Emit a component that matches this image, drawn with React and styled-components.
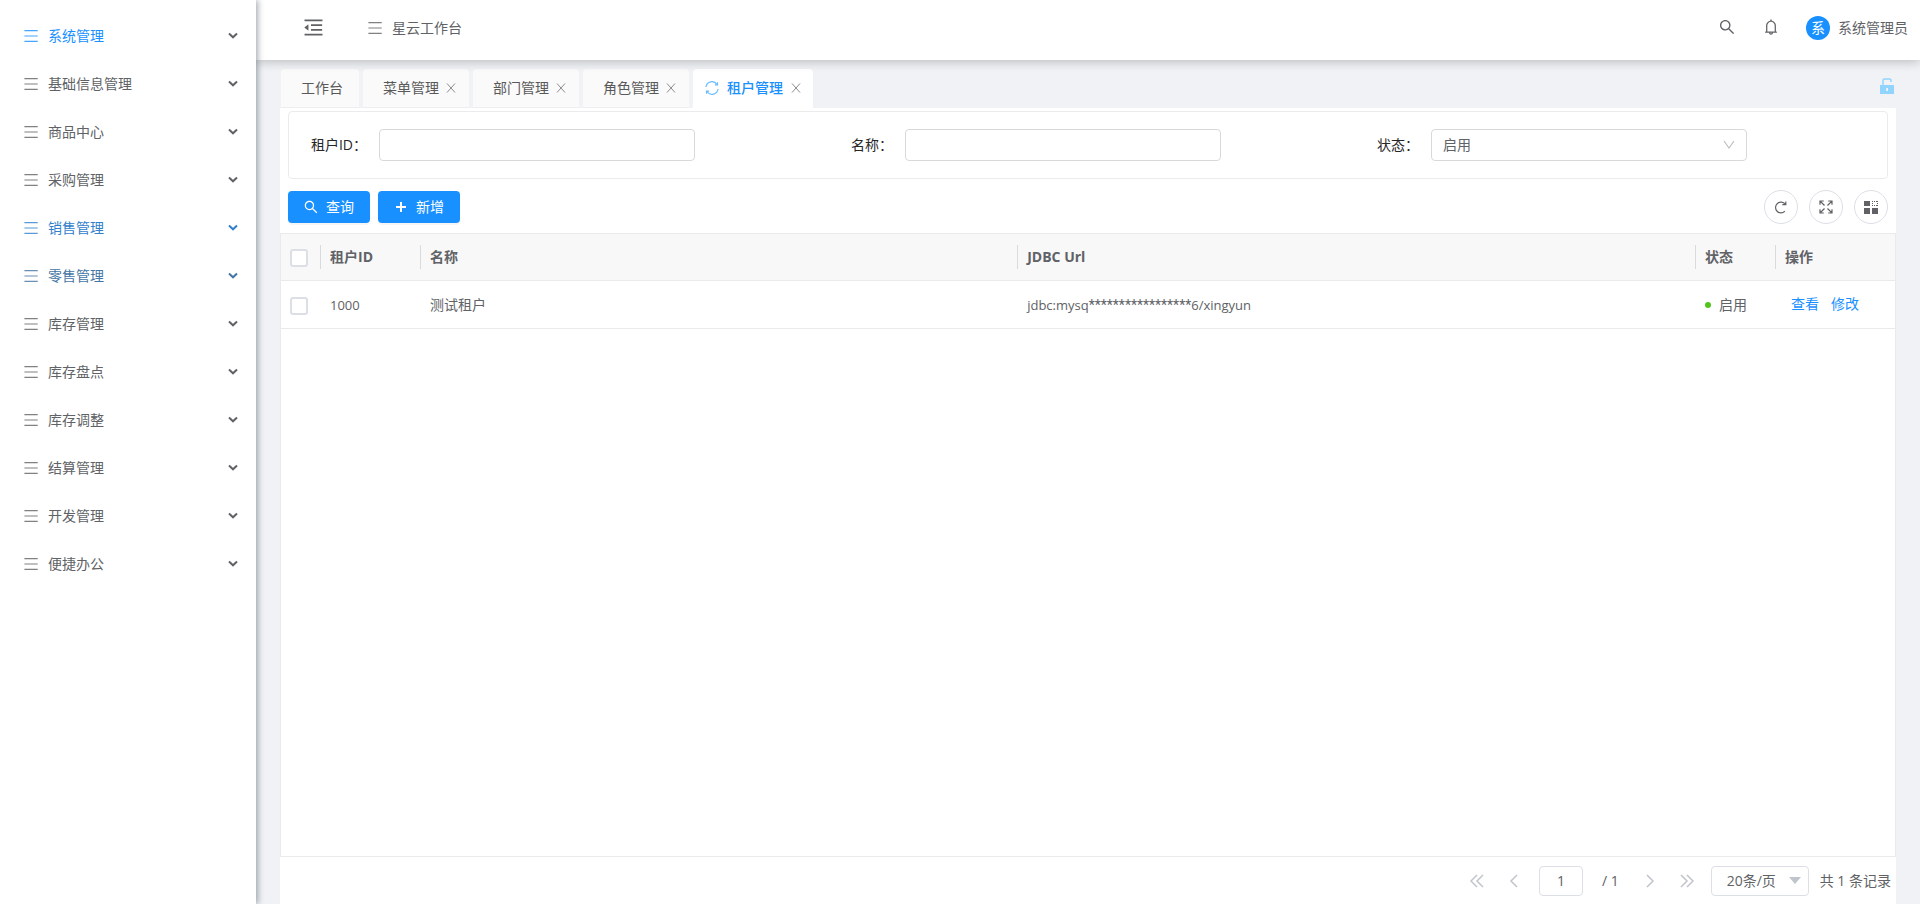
import React, { useState } from "react";
import styled, { createGlobalStyle } from "styled-components";

const GlobalStyle = createGlobalStyle`
  *, *::before, *::after { box-sizing: border-box; }
  body {
    margin: 0;
    color: #515a6e;
    background: #f0f2f5;
    font-family: "Open Sans", "Noto Sans CJK SC", sans-serif;
    font-size: 14px;
    line-height: 20px;
  }
  button, input, select { font: inherit; color: inherit; }
  button { cursor: pointer; }
`;

const blue = "#1890ff";
const ink = "#606266";

/* ---------- icons ---------- */

const Svg = ({ size = 14, box = 1024, children, ...rest }) => (
  <svg width={size} height={size} viewBox={`0 0 ${box} ${box}`} fill="currentColor" aria-hidden="true" {...rest}>
    {children}
  </svg>
);

const BarsIcon = () => (
  <Svg box={14}>
    <path d="M.4 1h13.300v1.200H.4zM.4 6.400h13.300v1.200H.4zM.4 11.800h13.300v1.200H.4z" />
  </Svg>
);

const ChevronIcon = () => (
  <Svg size={10} box={10} fill="none" stroke="currentColor" strokeWidth="2">
    <path d="M1 2.500l4 3.800 4-3.800" />
  </Svg>
);

const FoldIcon = () => (
  <Svg size={23} box={1024}>
    <path d="M408 442h480c4.400 0 8-3.600 8-8v-56c0-4.400-3.600-8-8-8H408c-4.400 0-8 3.600-8 8v56c0 4.400 3.600 8 8 8zm-8 204c0 4.400 3.600 8 8 8h480c4.400 0 8-3.600 8-8v-56c0-4.400-3.600-8-8-8H408c-4.400 0-8 3.600-8 8v56zm504-486H120c-4.400 0-8 3.600-8 8v56c0 4.400 3.600 8 8 8h784c4.400 0 8-3.600 8-8v-56c0-4.400-3.600-8-8-8zm0 632H120c-4.400 0-8 3.600-8 8v56c0 4.400 3.600 8 8 8h784c4.400 0 8-3.600 8-8v-56c0-4.400-3.600-8-8-8zM115.400 518.900L271.700 642c5.800 4.600 14.400.5 14.400-6.900V388.900c0-7.400-8.500-11.500-14.400-6.900L115.400 505.100a8.740 8.740 0 000 13.800z" />
  </Svg>
);

const SearchIcon = ({ size }) => (
  <Svg size={size}>
    <path d="M909.600 854.500L649.900 594.800C690.200 542.700 712 479 712 412c0-80.200-31.300-155.400-87.900-212.100-56.600-56.700-132-87.900-212.100-87.900s-155.500 31.300-212.100 87.900C143.200 256.500 112 331.800 112 412c0 80.100 31.300 155.500 87.900 212.100C256.500 680.800 331.800 712 412 712c67 0 130.600-21.800 182.700-62l259.700 259.600a8.200 8.200 0 0011.600 0l43.600-43.500a8.200 8.200 0 000-11.600zM570.400 570.400C528 612.700 471.800 636 412 636s-116-23.300-158.400-65.600C211.300 528 188 471.800 188 412s23.300-116.100 65.600-158.400C296 211.300 352.200 188 412 188s116.100 23.200 158.400 65.600S636 352.200 636 412s-23.300 116.100-65.600 158.400z" />
  </Svg>
);

const BellIcon = () => (
  <Svg size={18}>
    <path d="M816 768h-24V428c0-141.100-104.300-257.700-240-277.100V112c0-22.100-17.900-40-40-40s-40 17.900-40 40v38.900c-135.700 19.400-240 136-240 277.100v340h-24c-17.700 0-32 14.300-32 32v32c0 4.400 3.600 8 8 8h216c0 61.800 50.200 112 112 112s112-50.200 112-112h216c4.400 0 8-3.600 8-8v-32c0-17.700-14.300-32-32-32zM512 888c-26.500 0-48-21.500-48-48h96c0 26.500-21.500 48-48 48zM304 768V428c0-55.600 21.600-107.800 60.900-147.100S456.400 220 512 220c55.600 0 107.800 21.600 147.100 60.900S720 372.400 720 428v340H304z" />
  </Svg>
);

const CloseIcon = () => (
  <Svg size={10} box={10} fill="none" stroke="currentColor">
    <path d="M1 .5l8 9M9 .5l-8 9" />
  </Svg>
);

const SyncIcon = () => (
  <Svg size={14} box={14} fill="none" stroke="currentColor" strokeWidth="1.200">
    <path d="M1 6a6 6 0 0 1 11-2.500M13 8a6 6 0 0 1-11 2.500M12.500 1.200v2.600h-2.600M1.500 12.800v-2.600h2.600" />
  </Svg>
);

const UnlockIcon = () => (
  <Svg size={16} box={16}>
    <path d="M1 7h14v9H1zM7.200 10v3h1.800v-3z" fillRule="evenodd" />
    <path d="M4 7V2.500Q4 1 5.500 1h5Q12 1 12 2.500V4" fill="none" stroke="currentColor" strokeWidth="1.500" />
  </Svg>
);

const PlusIcon = () => (
  <Svg size={16} box={16} fill="none" stroke="currentColor" strokeWidth="2">
    <path d="M8 3v10M3 8h10" />
  </Svg>
);

const ReloadIcon = () => (
  <Svg size={14} box={14} fill="none" stroke="currentColor" strokeWidth="1.200">
    <path d="M11.200 4.200A5.400 5.400 0 1 0 10.900 11.200M11.800 1.500v3.200H8.300" />
  </Svg>
);

const ExpandIcon = () => (
  <Svg size={14} box={14} fill="none" stroke="currentColor" strokeWidth="1.200">
    <path d="M1 4.800V1h3.800M1 1l4.500 4.500M9.200 1H13v3.800M13 1L8.500 5.500M1 9.200V13h3.800M1 13l4.500-4.500M13 9.200V13H9.200M13 13L8.500 8.500" />
  </Svg>
);

const GridIcon = () => (
  <Svg size={14} box={14}>
    <path d="M0 1h6v5H0zM0 8h6v6H0zM8 8h6v6H8z" />
    <path d="M8 1.500h6M8 5.500h6M8.500 1v5M13.500 1v5" fill="none" stroke="currentColor" strokeDasharray="1 1" />
  </Svg>
);

const SelectArrow = () => (
  <Svg size={12} box={12} fill="none" stroke="#bfbfbf" strokeWidth="1.200">
    <path d="M1 2l5 7 5-7" />
  </Svg>
);

const Triangle = () => (
  <Svg size={12} box={12} fill="#c0c4cc">
    <path d="M0 2h12L6 9z" />
  </Svg>
);

const Arrows = ({ d }) => (
  <Svg size={14} box={14} fill="none" stroke="currentColor" strokeWidth="1.500">
    <path d={d} />
  </Svg>
);

/* ---------- frame ---------- */

const Page = styled.div`
  display: flex;
  min-height: 100vh;
`;

const Sidebar = styled.nav`
  position: relative;
  z-index: 2;
  flex: 0 0 256px;
  padding-top: 12px;
  background: #fff;
  box-shadow: 2px 0 6px rgba(0, 21, 41, 0.35);
`;

const MenuItem = styled.button`
  display: flex;
  align-items: center;
  gap: 10px;
  width: 100%;
  height: 48px;
  padding: 0 18px 0 24px;
  margin: 0;
  border: 0;
  background: none;
  text-align: left;
  color: ${(p) => p.$color || ink};
  svg:first-child { opacity: 0.8; }
  svg:last-child { color: ${(p) => (p.$open ? ink : "inherit")}; }
`;

const Grow = styled.span`
  flex: 1;
`;

const Main = styled.div`
  display: flex;
  flex-direction: column;
  flex: 1;
  min-width: 0;
`;

const Header = styled.header`
  position: relative;
  z-index: 1;
  display: flex;
  align-items: center;
  height: 60px;
  padding: 0 12px 4px 46px;
  background: #fff;
  color: ${ink};
  box-shadow: 0 2px 10px rgba(0, 0, 0, 0.22);
`;

const IconButton = styled.button`
  display: flex;
  padding: 0;
  border: 0;
  background: none;
  color: ${(p) => p.$color || ink};
`;

const HeaderButton = styled(IconButton)`
  padding-bottom: 2px;
`;

const Crumb = styled.span`
  display: flex;
  align-items: center;
  gap: 10px;
  margin-left: 43px;
  svg { opacity: 0.8; }
`;

const HeaderTools = styled.div`
  display: flex;
  align-items: center;
  gap: 26px;
  margin-left: auto;
`;

const User = styled.span`
  display: flex;
  align-items: center;
  gap: 8px;
`;

const Avatar = styled.span`
  width: 24px;
  height: 24px;
  border-radius: 50%;
  background: ${blue};
  color: #fff;
  line-height: 24px;
  text-align: center;
`;

/* ---------- tabs ---------- */

const TabBar = styled.div`
  display: flex;
  height: 48px;
  padding: 9px 25px 0;
`;

const Tabs = styled.div`
  display: flex;
  gap: 4px;
  flex: 1;
`;

const Tab = styled.div`
  display: flex;
  align-items: center;
  gap: ${(p) => (p.$active ? 8 : 7)}px;
  height: 39px;
  padding: 0 ${(p) => (p.$active ? 12 : p.$closable ? 13 : 16)}px 0 ${(p) => (p.$active ? 12 : 20)}px;
  border-radius: 4px 4px 0 0;
  border-bottom: 1px solid ${(p) => (p.$active ? "#fff" : "#eeeeee")};
  background: ${(p) => (p.$active ? "#fff" : "#fafafa")};
  color: ${(p) => (p.$active ? blue : "#595959")};
  > svg { color: #69bcff; }
`;

const TabLabel = styled.button`
  padding: 0;
  border: 0;
  background: none;
  font-weight: ${(p) => (p.$active ? 500 : 400)};
`;

const LockButton = styled(IconButton)`
  align-self: flex-start;
  margin-top: 9px;
`;

/* ---------- content ---------- */

const Content = styled.main`
  display: flex;
  flex-direction: column;
  flex: 1;
  margin: 0 24px;
  background: #fff;
`;

const SearchForm = styled.form`
  display: grid;
  grid-template-columns: repeat(3, 1fr);
  margin: 3px 8px 0;
  padding: 17px 10px;
  border: 1px solid #ebebeb;
  border-radius: 4px;
`;

const Field = styled.div`
  display: grid;
  grid-template-columns: 68px 60%;
  column-gap: 12px;
  align-items: center;
  color: #262626;
  label { text-align: right; white-space: nowrap; }
`;

const TextInput = styled.input`
  width: 100%;
  height: 32px;
  padding: 0 11px;
  border: 1px solid #d9d9d9;
  border-radius: 4px;
  background: #fff;
`;

const SelectBox = styled.span`
  display: grid;
  align-items: center;
  color: ${ink};
  > * { grid-area: 1 / 1; }
  svg { justify-self: end; margin-right: ${(p) => p.$inset || 12}px; pointer-events: none; }
`;

const Select = styled.select`
  appearance: none;
  width: ${(p) => p.$width || "100%"};
  height: ${(p) => p.$height || 32}px;
  padding: 0 ${(p) => p.$pad || 11}px;
  border: 1px solid ${(p) => p.$border || "#d9d9d9"};
  border-radius: 4px;
  background: #fff;
`;

const Toolbar = styled.div`
  display: flex;
  align-items: center;
  justify-content: space-between;
  height: 54px;
  padding: 2px 8px 0;
`;

const Group = styled.div`
  display: flex;
  gap: ${(p) => p.$gap}px;
`;

const PrimaryButton = styled.button`
  display: flex;
  align-items: center;
  gap: 7px;
  height: 32px;
  padding: 0 16px 0 15px;
  border: 0;
  border-radius: 4px;
  background: ${blue};
  color: #fff;
  box-shadow: 0 2px 0 rgba(0, 0, 0, 0.04);
`;

const RoundButton = styled.button`
  display: flex;
  align-items: center;
  justify-content: center;
  width: 34px;
  height: 34px;
  padding: 0;
  border: 1px solid #dcdfe6;
  border-radius: 50%;
  background: #fff;
  color: ${ink};
`;

const TableFrame = styled.div`
  flex: 1;
  border: 1px solid #e8eaec;
`;

const Table = styled.table`
  width: 100%;
  table-layout: fixed;
  border-collapse: separate;
  border-spacing: 0;
  color: ${ink};
`;

const Th = styled.th`
  height: 47px;
  padding: 0;
  border-bottom: 1px solid #e8eaec;
  background: #f8f8f9;
  text-align: left;
  font-size: 14px;
  font-weight: 700;
`;

const HeadCell = styled.div`
  display: flex;
  align-items: center;
  height: 24px;
  padding-left: 9px;
  border-right: ${(p) => (p.$last ? 0 : 1)}px solid #d9dbde;
`;

const Td = styled.td`
  height: 48px;
  padding: 0 0 0 9px;
  border-bottom: 1px solid #e8eaec;
`;

const Latin = styled.span`
  font-size: 13px;
`;

const Mask = styled.span`
  font-family: Roboto, sans-serif;
  font-size: 14px;
`;

const Check = styled.input`
  appearance: none;
  display: block;
  width: 18px;
  height: 18px;
  margin: 2px 0 0;
  border: 2px solid #dcdfe6;
  border-radius: 3px;
  background: #fff;
`;

const Status = styled.span`
  display: flex;
  align-items: center;
  gap: 8px;
  &::before {
    content: "";
    width: 6px;
    height: 6px;
    border-radius: 50%;
    background: #52c41a;
  }
`;

const Actions = styled.span`
  display: flex;
  gap: 12px;
  padding: 0 0 2px 6px;
  a { color: ${blue}; text-decoration: none; }
`;

const Pager = styled.div`
  display: flex;
  align-items: center;
  justify-content: flex-end;
  height: 47px;
  padding-right: 5px;
  color: ${ink};
`;

const PagerArrows = styled.div`
  display: flex;
  gap: 23px;
  padding: 0 ${(p) => p.$after}px 0 ${(p) => p.$before}px;
`;

const PageInput = styled.input`
  width: 44px;
  height: 30px;
  padding: 0;
  border: 1px solid #dcdfe6;
  border-radius: 4px;
  text-align: center;
`;

const PageCount = styled.span`
  margin-left: 19px;
`;

const Total = styled.span`
  margin-left: 11px;
`;

const menus = [
  { name: "系统管理", color: blue, open: true },
  { name: "基础信息管理" },
  { name: "商品中心" },
  { name: "采购管理" },
  { name: "销售管理", color: "#3180cb" },
  { name: "零售管理", color: "#4476a5" },
  { name: "库存管理" },
  { name: "库存盘点" },
  { name: "库存调整" },
  { name: "结算管理" },
  { name: "开发管理" },
  { name: "便捷办公" },
];

const tabs = ["工作台", "菜单管理", "部门管理", "角色管理", "租户管理"];

export default function App() {
  const [active, setActive] = useState("租户管理");
  return (
    <>
      <GlobalStyle />
      <Page>
        <Sidebar>
          {menus.map((m) => (
            <MenuItem key={m.name} $color={m.color} $open={m.open}>
              <BarsIcon />
              <Grow>{m.name}</Grow>
              <ChevronIcon />
            </MenuItem>
          ))}
        </Sidebar>
        <Main>
          <Header>
            <HeaderButton aria-label="收起菜单"><FoldIcon /></HeaderButton>
            <Crumb><BarsIcon />星云工作台</Crumb>
            <HeaderTools>
              <HeaderButton aria-label="搜索"><SearchIcon size={18} /></HeaderButton>
              <HeaderButton aria-label="消息"><BellIcon /></HeaderButton>
              <User><Avatar>系</Avatar>系统管理员</User>
            </HeaderTools>
          </Header>
          <TabBar>
            <Tabs>
              {tabs.map((t, i) => (
                <Tab key={t} $active={t === active} $closable={i > 0}>
                  {t === active && <SyncIcon />}
                  <TabLabel $active={t === active} onClick={() => setActive(t)}>{t}</TabLabel>
                  {i > 0 && <IconButton $color="#8c8c8c" aria-label={`关闭${t}`}><CloseIcon /></IconButton>}
                </Tab>
              ))}
            </Tabs>
            <LockButton $color="#91d5ff" aria-label="锁定"><UnlockIcon /></LockButton>
          </TabBar>
          <Content>
            <SearchForm>
              <Field>
                <label htmlFor="tenant-id">租户ID：</label>
                <TextInput id="tenant-id" />
              </Field>
              <Field>
                <label htmlFor="tenant-name">名称：</label>
                <TextInput id="tenant-name" />
              </Field>
              <Field>
                <label htmlFor="tenant-status">状态：</label>
                <SelectBox>
                  <Select id="tenant-status" defaultValue="启用">
                    <option>启用</option>
                    <option>停用</option>
                  </Select>
                  <SelectArrow />
                </SelectBox>
              </Field>
            </SearchForm>
            <Toolbar>
              <Group $gap={8}>
                <PrimaryButton><SearchIcon size={16} />查询</PrimaryButton>
                <PrimaryButton><PlusIcon />新增</PrimaryButton>
              </Group>
              <Group $gap={11}>
                <RoundButton aria-label="刷新"><ReloadIcon /></RoundButton>
                <RoundButton aria-label="全屏"><ExpandIcon /></RoundButton>
                <RoundButton aria-label="列设置"><GridIcon /></RoundButton>
              </Group>
            </Toolbar>
            <TableFrame>
              <Table>
                <colgroup>
                  <col width="40" />
                  <col width="100" />
                  <col width="37%" />
                  <col />
                  <col width="80" />
                  <col width="119" />
                </colgroup>
                <thead>
                  <tr>
                    <Th><HeadCell><Check type="checkbox" aria-label="全选" /></HeadCell></Th>
                    <Th><HeadCell>租户ID</HeadCell></Th>
                    <Th><HeadCell>名称</HeadCell></Th>
                    <Th><HeadCell>JDBC Url</HeadCell></Th>
                    <Th><HeadCell>状态</HeadCell></Th>
                    <Th><HeadCell $last>操作</HeadCell></Th>
                  </tr>
                </thead>
                <tbody>
                  <tr>
                    <Td><Check type="checkbox" aria-label="选择 1000" /></Td>
                    <Td><Latin>1000</Latin></Td>
                    <Td>测试租户</Td>
                    <Td><Latin>jdbc:mysq<Mask>*****************</Mask>6/xingyun</Latin></Td>
                    <Td><Status>启用</Status></Td>
                    <Td><Actions><a href="#view">查看</a><a href="#edit">修改</a></Actions></Td>
                  </tr>
                </tbody>
              </Table>
            </TableFrame>
            <Pager>
              <PagerArrows $before={0} $after={18}>
                <IconButton $color="#c0c4cc" aria-label="首页"><Arrows d="M7 1L1 7l6 6M13 1L7 7l6 6" /></IconButton>
                <IconButton $color="#c0c4cc" aria-label="上一页"><Arrows d="M10 1L4 7l6 6" /></IconButton>
              </PagerArrows>
              <PageInput defaultValue="1" aria-label="页码" />
              <PageCount>/ 1</PageCount>
              <PagerArrows $before={24} $after={17}>
                <IconButton $color="#c0c4cc" aria-label="下一页"><Arrows d="M4 1l6 6-6 6" /></IconButton>
                <IconButton $color="#c0c4cc" aria-label="末页"><Arrows d="M1 1l6 6-6 6M7 1l6 6-6 6" /></IconButton>
              </PagerArrows>
              <SelectBox $inset={8}>
                <Select $width="98px" $height={30} $pad={15} $border="#dcdfe6" aria-label="每页条数" defaultValue="20条/页">
                  <option>20条/页</option>
                  <option>50条/页</option>
                </Select>
                <Triangle />
              </SelectBox>
              <Total>共 1 条记录</Total>
            </Pager>
          </Content>
        </Main>
      </Page>
    </>
  );
}
